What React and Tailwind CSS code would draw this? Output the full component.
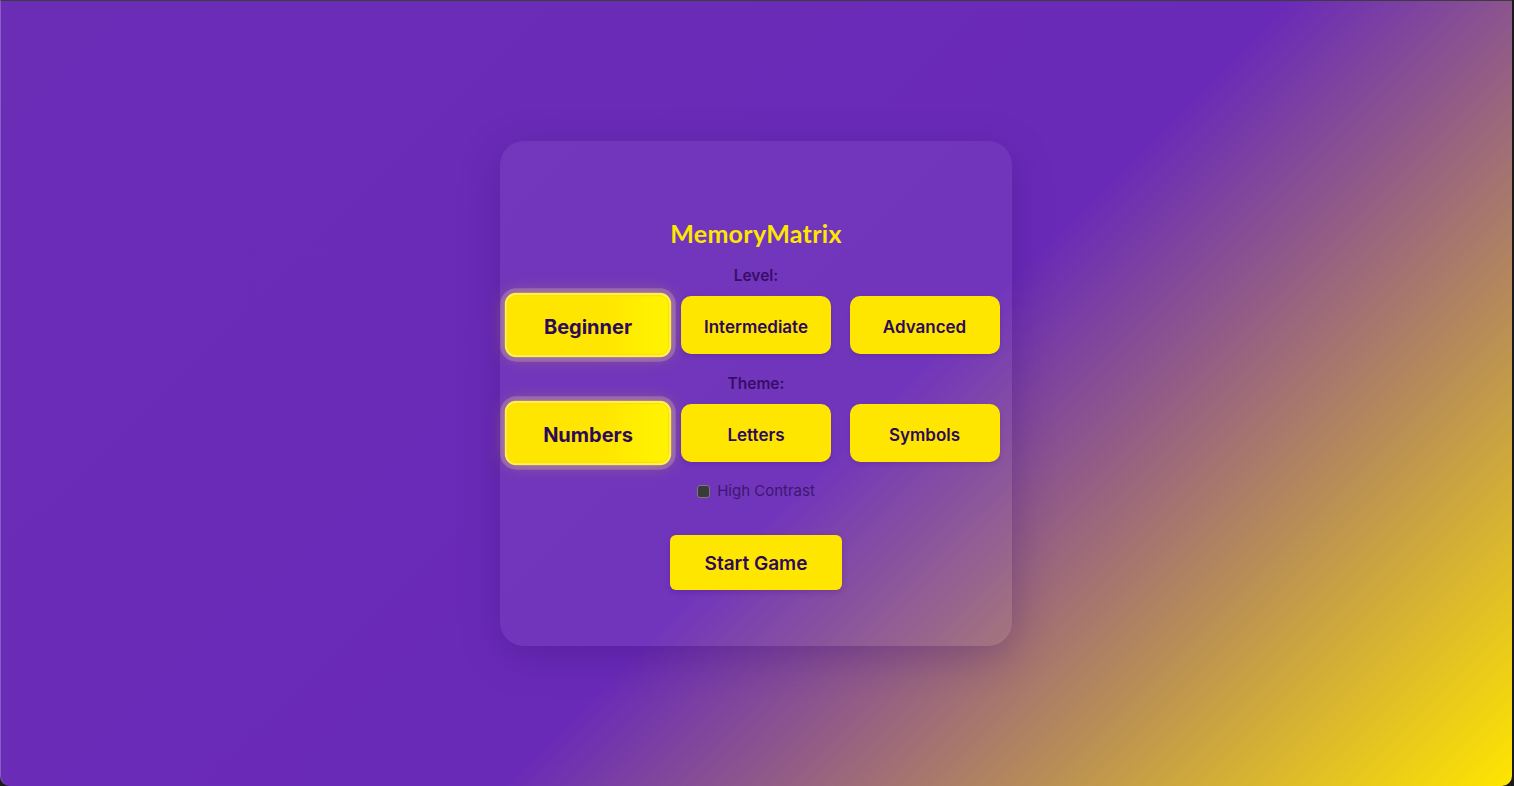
import { useState } from 'react';

// ── Option lists ──────────────────────────────────────────────────────────────

const LEVELS = ['Beginner', 'Intermediate', 'Advanced'];
const THEMES = ['Numbers', 'Letters', 'Symbols'];

// ── Choice button (selected one grows and glows) ──────────────────────────────

function ChoiceButton({ label, selected, onClick }) {
  return (
    <button
      type="button"
      onClick={onClick}
      className={`h-[58px] w-[150px] rounded-[10px] text-[#2d0a57] transition-transform ${
        selected
          ? 'scale-[1.11] border-2 border-[#fff04a] bg-[linear-gradient(90deg,#ffe600_0%,#ffe600_60%,#fff400_100%)] pt-[2px] text-[18px] font-bold shadow-[inset_0_0_0_1px_#ffe000,0_0_0_4px_rgba(255,235,170,0.22),0_0_16px_rgba(255,230,0,0.25)]'
          : 'bg-[#ffe600] pt-[6px] text-[17px] font-semibold shadow-[0_2px_4px_rgba(40,0,80,0.15)]'
      }`}
    >
      {label}
    </button>
  );
}

function OptionGroup({ title, options, value, onChange }) {
  return (
    <div className="flex flex-col items-center">
      <p className="text-[15.5px] leading-5 font-semibold text-[#380d68]">{title}</p>
      <div className="mt-[10px] flex justify-center gap-[18.5px]">
        {options.map((opt) => (
          <ChoiceButton key={opt} label={opt} selected={opt === value} onClick={() => onChange(opt)} />
        ))}
      </div>
    </div>
  );
}

export default function App() {
  const [level, setLevel] = useState('Beginner');
  const [theme, setTheme] = useState('Numbers');
  const [highContrast, setHighContrast] = useState(false);

  return (
    <div className="h-[786px] w-full bg-[#1a1a1a]">
      <div
        className="flex h-full w-[1512px] items-start justify-center overflow-hidden rounded-b-[10px] border-t border-l border-t-[#3c3c3c] border-l-[#8a5cc4] bg-[linear-gradient(135deg,#6b2db6_0%,#6a2ab8_56%,#ffe600_100%)] font-['Inter',sans-serif]"
      >
        {/* Card */}
        <div className="mt-[140px] -ml-px flex h-[505px] w-[512px] flex-col items-center rounded-3xl bg-white/5 pt-[76px] shadow-[0_10px_40px_rgba(40,0,90,0.25)]">
          <h1 className="font-['Lato',sans-serif] text-[25px] leading-8 font-bold tracking-[0.3px] text-[#ffe600]">
            MemoryMatrix
          </h1>

          <div className="mt-[17px]">
            <OptionGroup title="Level:" options={LEVELS} value={level} onChange={setLevel} />
          </div>

          <div className="mt-[20px]">
            <OptionGroup title="Theme:" options={THEMES} value={theme} onChange={setTheme} />
          </div>

          {/* High contrast toggle */}
          <label className="mt-[19px] flex h-5 items-center gap-[7px] text-[15px] text-[#3d1770]">
            <input
              type="checkbox"
              checked={highContrast}
              onChange={(e) => setHighContrast(e.target.checked)}
              className="h-[13px] w-[13px] appearance-none rounded-[3px] border border-[#7a7a7a] bg-[#3a3a3a]"
            />
            High Contrast
          </label>

          <button
            type="button"
            className="mt-[34px] h-[55px] w-[172px] rounded-md bg-[#ffe600] pt-[3px] text-[19px] font-semibold text-[#2d0a57] shadow-[0_2px_6px_rgba(40,0,80,0.2)]"
          >
            Start Game
          </button>
        </div>
      </div>
    </div>
  );
}
